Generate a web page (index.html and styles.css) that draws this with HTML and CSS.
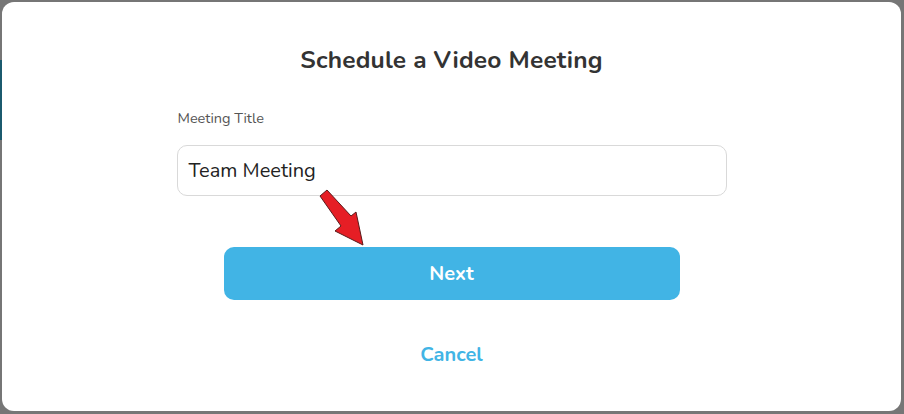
FILE: index.html
```html
<!DOCTYPE html>
<html>
<head>
<meta charset="utf-8">
<link rel="stylesheet" href="styles.css">
</head>
<body>
<div class="backdrop-strip"></div>
<div class="modal">
  <h1 class="title">Schedule a Video Meeting</h1>
  <div class="field">
    <label class="label">Meeting Title</label>
    <div class="input">Team Meeting</div>
  </div>
  <button class="btn-next">Next</button>
  <button class="btn-cancel">Cancel</button>
  <svg class="arrow" width="60" height="70" viewBox="0 0 60 70">
    <path d="M2 8 L9 2 L33 28 L38 24 L45 57 L17 43 L23 38 Z" fill="#e61e25" stroke="#5a1a1a" stroke-width="1" stroke-linejoin="miter"/>
  </svg>
</div>
</body>
</html>
```
FILE: styles.css
```css
html, body {
  margin: 0;
  padding: 0;
}
body {
  width: 904px;
  height: 414px;
  background: #767676;
  box-sizing: border-box;
  padding: 2px 3px 3px 2px;
  position: relative;
  overflow: hidden;
  font-family: "Nunito", Lato, "Noto Sans", sans-serif;
}
.backdrop-strip {
  position: absolute;
  left: 0;
  top: 60px;
  width: 3px;
  height: 80px;
  background: #1b5a6e;
}
.modal {
  position: relative;
  background: #fff;
  border-radius: 12px;
  height: 409px;
  display: flex;
  flex-direction: column;
  align-items: center;
  box-sizing: border-box;
  padding-top: 42px;
}
.title {
  margin: 0;
  font-size: 24.5px;
  font-weight: 700;
  color: #333;
  line-height: 32px;
  letter-spacing: 0.2px;
}
.field {
  width: 550px;
  margin-top: 33px;
  display: flex;
  flex-direction: column;
}
.label {
  font-size: 14.5px;
  color: #555;
  line-height: 18px;
  padding-left: 1px;
}
.input {
  margin-top: 18px;
  height: 51px;
  box-sizing: border-box;
  border: 1px solid #d9d9d9;
  border-radius: 10px;
  padding: 0 11px;
  display: flex;
  align-items: center;
  font-size: 20px;
  color: #222;
}
.btn-next {
  margin-top: 51px;
  width: 456px;
  height: 53px;
  border: none;
  border-radius: 10px;
  background: #41b4e5;
  color: #fff;
  font-family: inherit;
  font-size: 20px;
  font-weight: 700;
}
.btn-cancel {
  margin-top: 43px;
  border: none;
  background: none;
  padding: 0;
  color: #41b4e5;
  font-family: inherit;
  font-size: 20px;
  font-weight: 700;
  line-height: 24px;
}
.arrow {
  position: absolute;
  left: 316px;
  top: 186px;
}
```
